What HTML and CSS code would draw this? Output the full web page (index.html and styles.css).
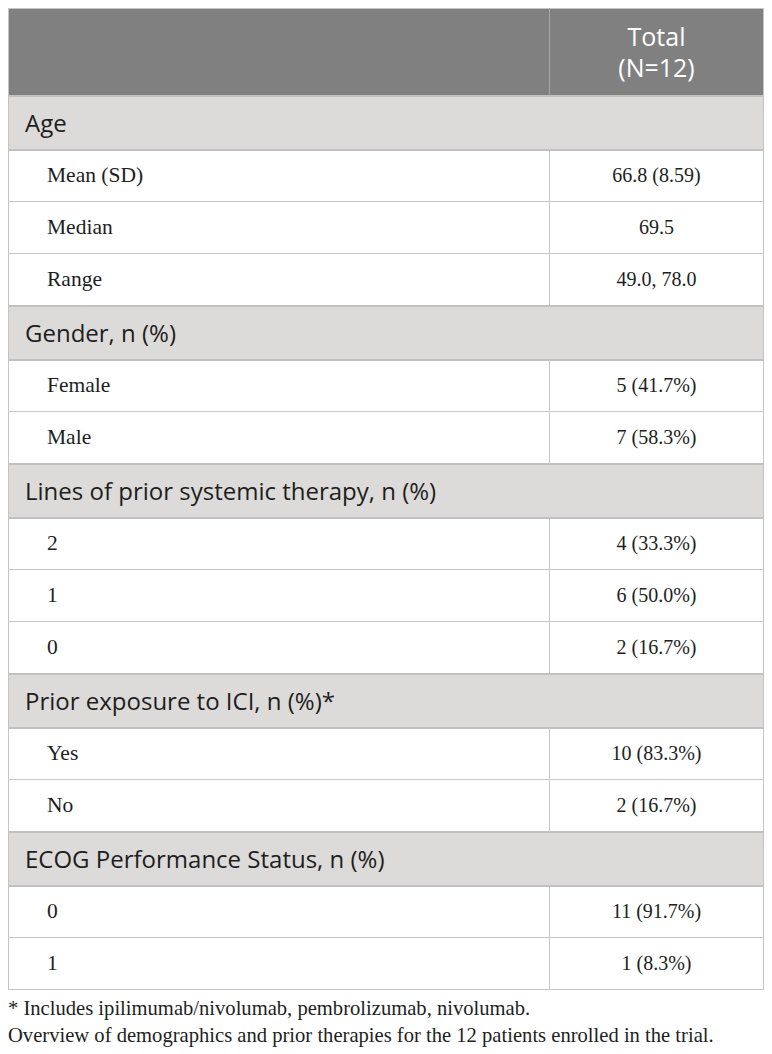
FILE: index.html
```html
<!DOCTYPE html>
<html>
<head>
  <meta charset="utf-8">
  <title>Patient characteristics</title>
  <link rel="stylesheet" href="styles.css">
</head>
<body>
  <table class="demo">
    <thead>
      <tr>
        <th class="label-col"></th>
        <th class="total-col">Total<br>(N=12)</th>
      </tr>
    </thead>
    <tbody>
      <tr class="group"><td colspan="2">Age</td></tr>
      <tr><td>Mean (SD)</td><td>66.8 (8.59)</td></tr>
      <tr><td>Median</td><td>69.5</td></tr>
      <tr><td>Range</td><td>49.0, 78.0</td></tr>

      <tr class="group"><td colspan="2">Gender, n (%)</td></tr>
      <tr><td>Female</td><td>5 (41.7%)</td></tr>
      <tr><td>Male</td><td>7 (58.3%)</td></tr>

      <tr class="group"><td colspan="2">Lines of prior systemic therapy, n (%)</td></tr>
      <tr><td>2</td><td>4 (33.3%)</td></tr>
      <tr><td>1</td><td>6 (50.0%)</td></tr>
      <tr><td>0</td><td>2 (16.7%)</td></tr>

      <tr class="group"><td colspan="2">Prior exposure to ICI, n (%)*</td></tr>
      <tr><td>Yes</td><td>10 (83.3%)</td></tr>
      <tr><td>No</td><td>2 (16.7%)</td></tr>

      <tr class="group"><td colspan="2">ECOG Performance Status, n (%)</td></tr>
      <tr><td>0</td><td>11 (91.7%)</td></tr>
      <tr><td>1</td><td>1 (8.3%)</td></tr>
    </tbody>
  </table>

  <p class="note">* Includes ipilimumab/nivolumab, pembrolizumab, nivolumab.</p>
  <p class="caption">Overview of demographics and prior therapies for the 12 patients enrolled in the trial.</p>
</body>
</html>
```

FILE: styles.css
```css
* {
  box-sizing: border-box;
}

body {
  margin: 8px;
  background: #fff;
  color: #1e1e1e;
  font-family: "Liberation Serif", serif;
}

.demo {
  width: 756px;
  border-collapse: collapse;
  border: 1px solid #c4c4c4;
}

.demo th {
  background: #808080;
  color: #fff;
  font-family: "Open Sans", sans-serif;
  font-weight: normal;
  font-size: 25px;
  line-height: 31px;
  height: 87px;
  border-left: 1px solid #a8a8a8;
  padding: 0;
}

.demo th.label-col {
  width: 541px;
  border-left: none;
}

.demo td {
  height: 52px;
  font-size: 21.5px;
  border-top: 1px solid #c8c8c8;
  padding: 0 0 0 38px;
}

.demo td + td {
  border-left: 1px solid #c8c8c8;
  text-align: center;
  font-size: 20px;
  padding: 0;
}

.demo .group td {
  height: 54px;
  background: #dcdbd9;
  font-family: "Open Sans", sans-serif;
  font-size: 24px;
  padding-left: 16px;
  border-top: 2px solid #c2c2c2;
  border-bottom: 2px solid #c2c2c2;
}

.note,
.caption {
  margin: 0;
  font-size: 20.6px;
  line-height: 27px;
}

.note {
  margin-top: 5px;
}
```
